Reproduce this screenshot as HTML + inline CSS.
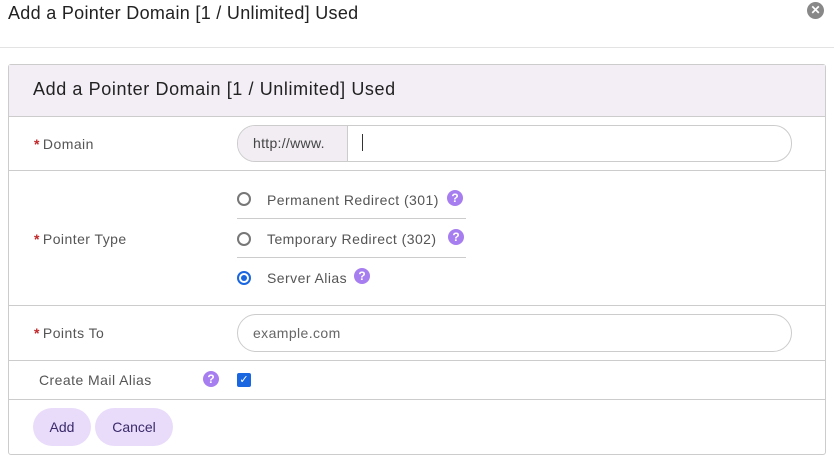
<!DOCTYPE html><html><head><style>
*{margin:0;padding:0;box-sizing:border-box}
body{width:834px;height:464px;background:#fff;font-family:"Liberation Sans",sans-serif;position:relative;overflow:hidden;color:#555}
.a{position:absolute}
.q{position:absolute;width:16px;height:16px;border-radius:50%;background:#a77ef0;color:#fff;font-size:12px;font-weight:bold;text-align:center;line-height:16px}
.r{position:absolute;width:14px;height:14px;border-radius:50%;border:2px solid #777}
.lbl{position:absolute;font-size:14px;color:#555;letter-spacing:0.45px}
.st{color:#c0282a;font-weight:bold;margin-right:3px}
.hl{position:absolute;left:9px;width:816px;height:1px;background:#ccc}
</style></head><body>
<div class="a" style="left:8px;top:3px;font-size:18px;color:#222;letter-spacing:0.3px">Add a Pointer Domain [1 / Unlimited] Used</div>
<div class="a" style="left:807px;top:2px;width:17px;height:17px;border-radius:50%;background:#888;color:#fff;font-size:12px;font-weight:bold;text-align:center;line-height:17px">✕</div>
<div class="a" style="left:0;top:47px;width:834px;height:1px;background:#e3e3e3"></div>
<div class="a" style="left:8px;top:64px;width:818px;height:391px;border:1px solid #ccc;border-radius:3px"></div>
<div class="a" style="left:9px;top:65px;width:816px;height:51px;background:#f3eef6"></div>
<div class="a" style="left:33px;top:79px;font-size:18px;color:#222;letter-spacing:0.6px">Add a Pointer Domain [1 / Unlimited] Used</div>
<div class="hl" style="top:116px"></div><div class="hl" style="top:170px"></div><div class="hl" style="top:305px"></div><div class="hl" style="top:360px"></div><div class="hl" style="top:399px"></div>
<div class="lbl" style="left:34px;top:136px"><span class="st">*</span>Domain</div>
<div class="a" style="left:237px;top:125px;width:555px;height:37px;border:1px solid #ccc;border-radius:18px;overflow:hidden"><div style="width:110px;height:100%;background:#f1edf3;border-right:1px solid #ccc;font-size:14px;line-height:35px;padding-left:15px;color:#444;letter-spacing:0.3px">http://www.</div></div>
<div class="a" style="left:362px;top:134px;width:1px;height:17px;background:#333"></div>
<div class="lbl" style="left:34px;top:231px"><span class="st">*</span>Pointer Type</div>
<div class="r" style="left:237px;top:192px"></div><div class="lbl" style="left:267px;top:192px">Permanent Redirect (301)</div><div class="q" style="left:447px;top:190px">?</div>
<div class="a" style="left:237px;top:218px;width:229px;height:1px;background:#ccc"></div>
<div class="r" style="left:237px;top:232px"></div><div class="lbl" style="left:267px;top:231px">Temporary Redirect (302)</div><div class="q" style="left:448px;top:229px">?</div>
<div class="a" style="left:237px;top:257px;width:229px;height:1px;background:#ccc"></div>
<div class="r" style="left:237px;top:271px;border-color:#1a66e0"><div style="width:6px;height:6px;border-radius:50%;background:#1a66e0;margin:2px"></div></div><div class="lbl" style="left:267px;top:270px">Server Alias</div><div class="q" style="left:354px;top:268px">?</div>
<div class="lbl" style="left:34px;top:325px"><span class="st">*</span>Points To</div>
<div class="a" style="left:237px;top:314px;width:555px;height:38px;border:1px solid #ccc;border-radius:19px;font-size:14px;line-height:36px;padding-left:15px;color:#666;letter-spacing:0.4px">example.com</div>
<div class="lbl" style="left:39px;top:372px">Create Mail Alias</div><div class="q" style="left:203px;top:371px">?</div>
<div class="a" style="left:237px;top:373px;width:14px;height:14px;background:#1a66e0;border-radius:2px;color:#fff;font-size:11px;text-align:center;line-height:14px">✓</div>
<div class="a" style="left:33px;top:408px;width:58px;height:38px;border-radius:19px;background:#e9dcfb;color:#3a2a6a;font-size:14px;text-align:center;line-height:38px">Add</div>
<div class="a" style="left:95px;top:408px;width:78px;height:38px;border-radius:19px;background:#e9dcfb;color:#3a2a6a;font-size:14px;text-align:center;line-height:38px">Cancel</div>
</body></html>
